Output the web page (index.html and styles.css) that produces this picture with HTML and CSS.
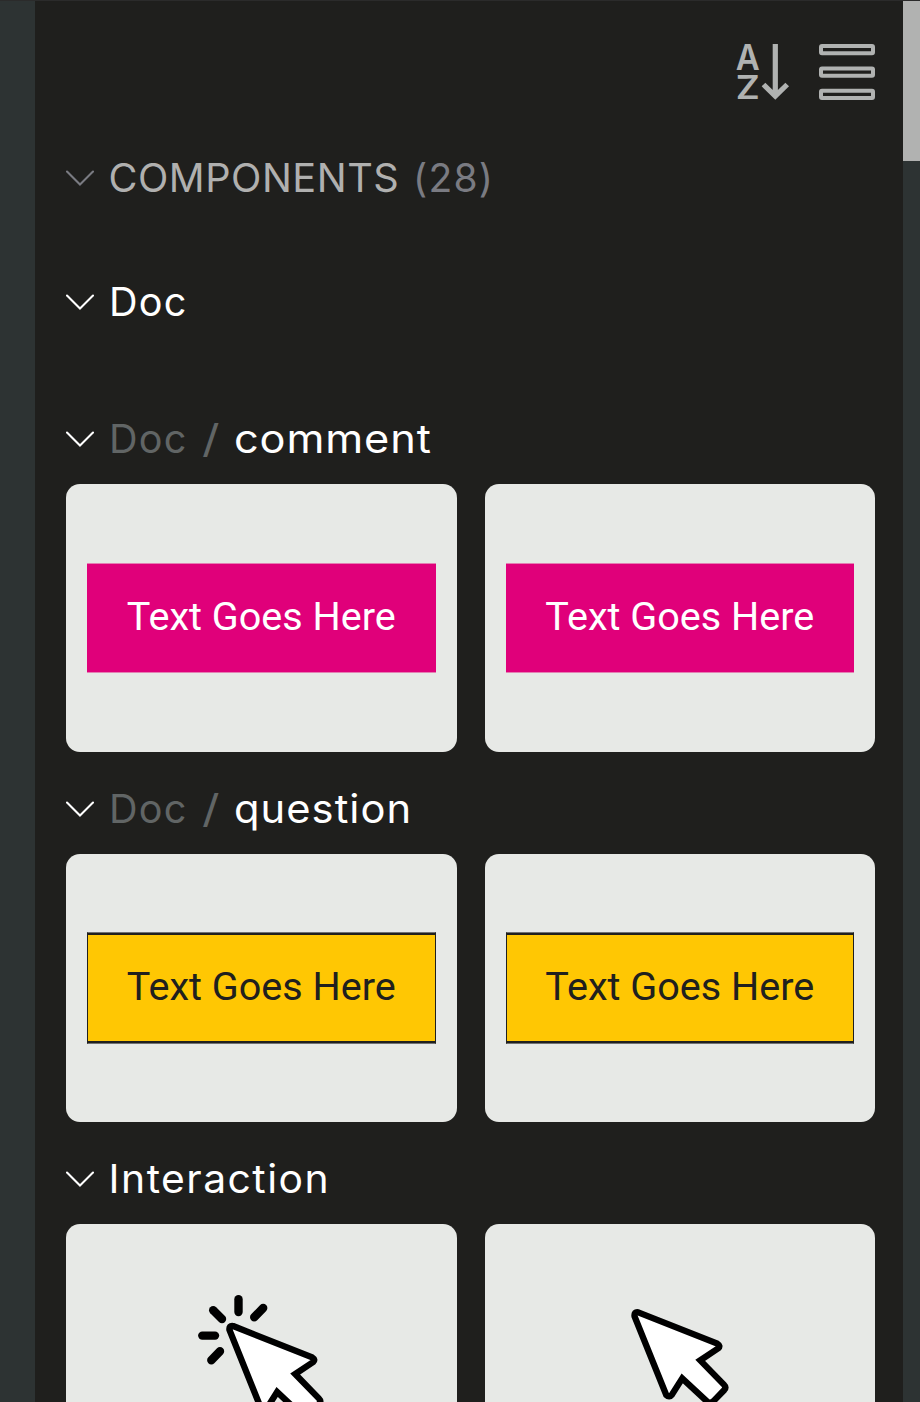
FILE: index.html
```html
<!DOCTYPE html>
<html lang="en">
<head>
<meta charset="utf-8">
<title>Components</title>
<link rel="stylesheet" href="styles.css">
</head>
<body>
<svg class="defs" width="0" height="0" aria-hidden="true">
  <symbol id="chevron" viewBox="0 0 28 56"><path d="M1 21.5 14 34.5 27 21.5" fill="none" stroke="currentColor" stroke-width="2.1" stroke-linecap="round"/></symbol>
  <symbol id="pointer" viewBox="0 0 360 420" overflow="visible"><path d="M85 67 322 161Q333 168 325 175L271 211 342 284Q350 292 343 300L310 334Q300 342 291 334L217 265 186 314Q178 324 169 315L74 79Q72 65 85 67Z" fill="#fff" stroke="#000" stroke-width="19"/></symbol>
</svg>
<div class="app">
  <main class="panel">
    <div class="toolbar">
      <svg class="sort" viewBox="0 0 54 56">
        <text class="sort-letter" x="-1.2" y="26" textLength="24" lengthAdjust="spacingAndGlyphs">A</text>
        <text class="sort-letter last" x="-1.2" y="54.5" textLength="24" lengthAdjust="spacingAndGlyphs">Z</text>
        <path d="M38.3 0V53M26.5 40.5 38.3 52.2 50.2 40.5" fill="none" stroke="currentColor" stroke-width="5.2"/>
      </svg>
      <svg class="list" viewBox="0 0 56 56">
        <g fill="none" stroke="currentColor" stroke-width="4"><rect x="2" y="2" width="52" height="7.3" rx="1"/><rect x="2" y="24.4" width="52" height="7.3" rx="1"/><rect x="2" y="46.7" width="52" height="7.3" rx="1"/></g>
      </svg>
    </div>
    <h1 class="head root"><svg class="chevron"><use href="#chevron"/></svg><span class="word-components">COMPONENTS</span><span class="count">(28)</span></h1>
    <h2 class="head group"><svg class="chevron"><use href="#chevron"/></svg><span class="word-doc">Doc</span></h2>
    <h2 class="head first"><svg class="chevron"><use href="#chevron"/></svg><span class="word-doc dim">Doc</span><span class="slash dim">/</span><span class="word-comment">comment</span></h2>
    <div class="cards">
      <div class="card"><div class="label pink">Text Goes Here</div></div>
      <div class="card"><div class="label pink">Text Goes Here</div></div>
    </div>
    <h2 class="head"><svg class="chevron"><use href="#chevron"/></svg><span class="word-doc dim">Doc</span><span class="slash dim">/</span><span class="word-question">question</span></h2>
    <div class="cards">
      <div class="card"><div class="label yellow">Text Goes Here</div></div>
      <div class="card"><div class="label yellow">Text Goes Here</div></div>
    </div>
    <h2 class="head"><svg class="chevron"><use href="#chevron"/></svg><span class="word-interaction">Interaction</span></h2>
    <div class="cards">
      <div class="card">
        <svg class="art" viewBox="66 1224 390.5 268">
          <use href="#pointer" x="0" y="0" width="120" height="140" transform="translate(204.8 1303.7)"/>
          <g stroke="#000" stroke-width="8.4" stroke-linecap="round"><path d="M238.5 1299.2V1312"/><path d="M263.2 1308 254.2 1317.2"/><path d="M213.2 1310.2 222 1319"/><path d="M202.3 1335.6H215"/><path d="M220 1351.3 211.3 1360.2"/></g>
        </svg>
      </div>
      <div class="card">
        <svg class="art" viewBox="484.5 1224 390.5 268">
          <use href="#pointer" x="0" y="0" width="120" height="140" transform="translate(609.4 1290)"/>
        </svg>
      </div>
    </div>
  </main>
  <div class="scrollbar"><div class="thumb"></div></div>
</div>
</body>
</html>
```

FILE: styles.css
```css
* { box-sizing: border-box; }
body { margin: 0; background: #2d3333; overflow: hidden; }
.defs { display: block; }
.app {
  display: flex;
  height: 1402px;
  padding-left: 35px;
  border-top: 1px solid #2b2b2b;
  overflow: hidden;
}
.panel {
  flex: 1;
  min-width: 0;
  padding: 43px 28px 0 31px;
  background: #1f1f1d;
  overflow: hidden;
}
.scrollbar { width: 17px; background: #2d3333; }
.thumb { height: 160px; background: #b1b2b1; }
.toolbar {
  display: flex;
  justify-content: flex-end;
  gap: 28px;
  height: 56px;
  color: #b0b2b1;
}
.sort { width: 54px; height: 56px; overflow: visible; }
.sort-letter { font: 600 35px Inter, sans-serif; fill: currentColor; }
.sort-letter.last { font-size: 33px; }
.list { width: 56px; height: 56px; }
.head {
  display: flex;
  align-items: center;
  height: 56px;
  margin: 29px 0 17px;
  color: #fff;
  font: 400 39px/56px Inter, "Liberation Sans", sans-serif;
  white-space: pre;
}
.head span { transform-origin: 0 50%; }
.head.root { margin: 50px 0 0; color: #b0b0af; }
.head.group { margin: 68px 0 0; }
.head.first { margin-top: 81px; }
.chevron { width: 28px; height: 56px; margin-right: 12px; flex: none; }
.root .chevron, .count { color: #7a7b82; }
.dim { color: #616565; }
.word-components { width: 307px; letter-spacing: 0.5px; padding-left: 2.4px; transform: scaleX(1.018); }
.count { letter-spacing: 1.2px; }
.word-doc { width: 96px; letter-spacing: 1.2px; padding-left: 3px; transform: scaleX(1.015); }
.slash { width: 32px; transform: scaleX(1.25); }
.word-comment { letter-spacing: 0.8px; transform: scaleX(1.11); }
.word-question { letter-spacing: 1px; transform: scaleX(1.068); }
.word-interaction { letter-spacing: 1.4px; padding-left: 2.5px; transform: scaleX(1.047); }
.cards { display: grid; grid-template-columns: 1fr 1fr; gap: 28px; }
.card {
  display: flex;
  align-items: center;
  height: 268px;
  padding: 0 21px;
  border-radius: 14px;
  background: #e7e9e6;
  overflow: hidden;
}
.label {
  flex: 1;
  font: 400 39.6px/106px Roboto, sans-serif;
  text-align: center;
  white-space: nowrap;
}
.pink {
  height: 110px;
  border: solid #e480b3;
  border-width: 1px 0;
  background: #e0007a;
  color: #fff;
}
.yellow {
  height: 112px;
  border: 1px solid #20201e;
  border-top-color: #707173;
  border-bottom-color: #707173;
  box-shadow: inset 0 2px #20201e, inset 0 -2px #20201e;
  background: #ffc703;
  color: #20201e;
  line-height: 108px;
}
.art { flex: none; width: 390.5px; height: 268px; margin: 0 -21px; }
```
